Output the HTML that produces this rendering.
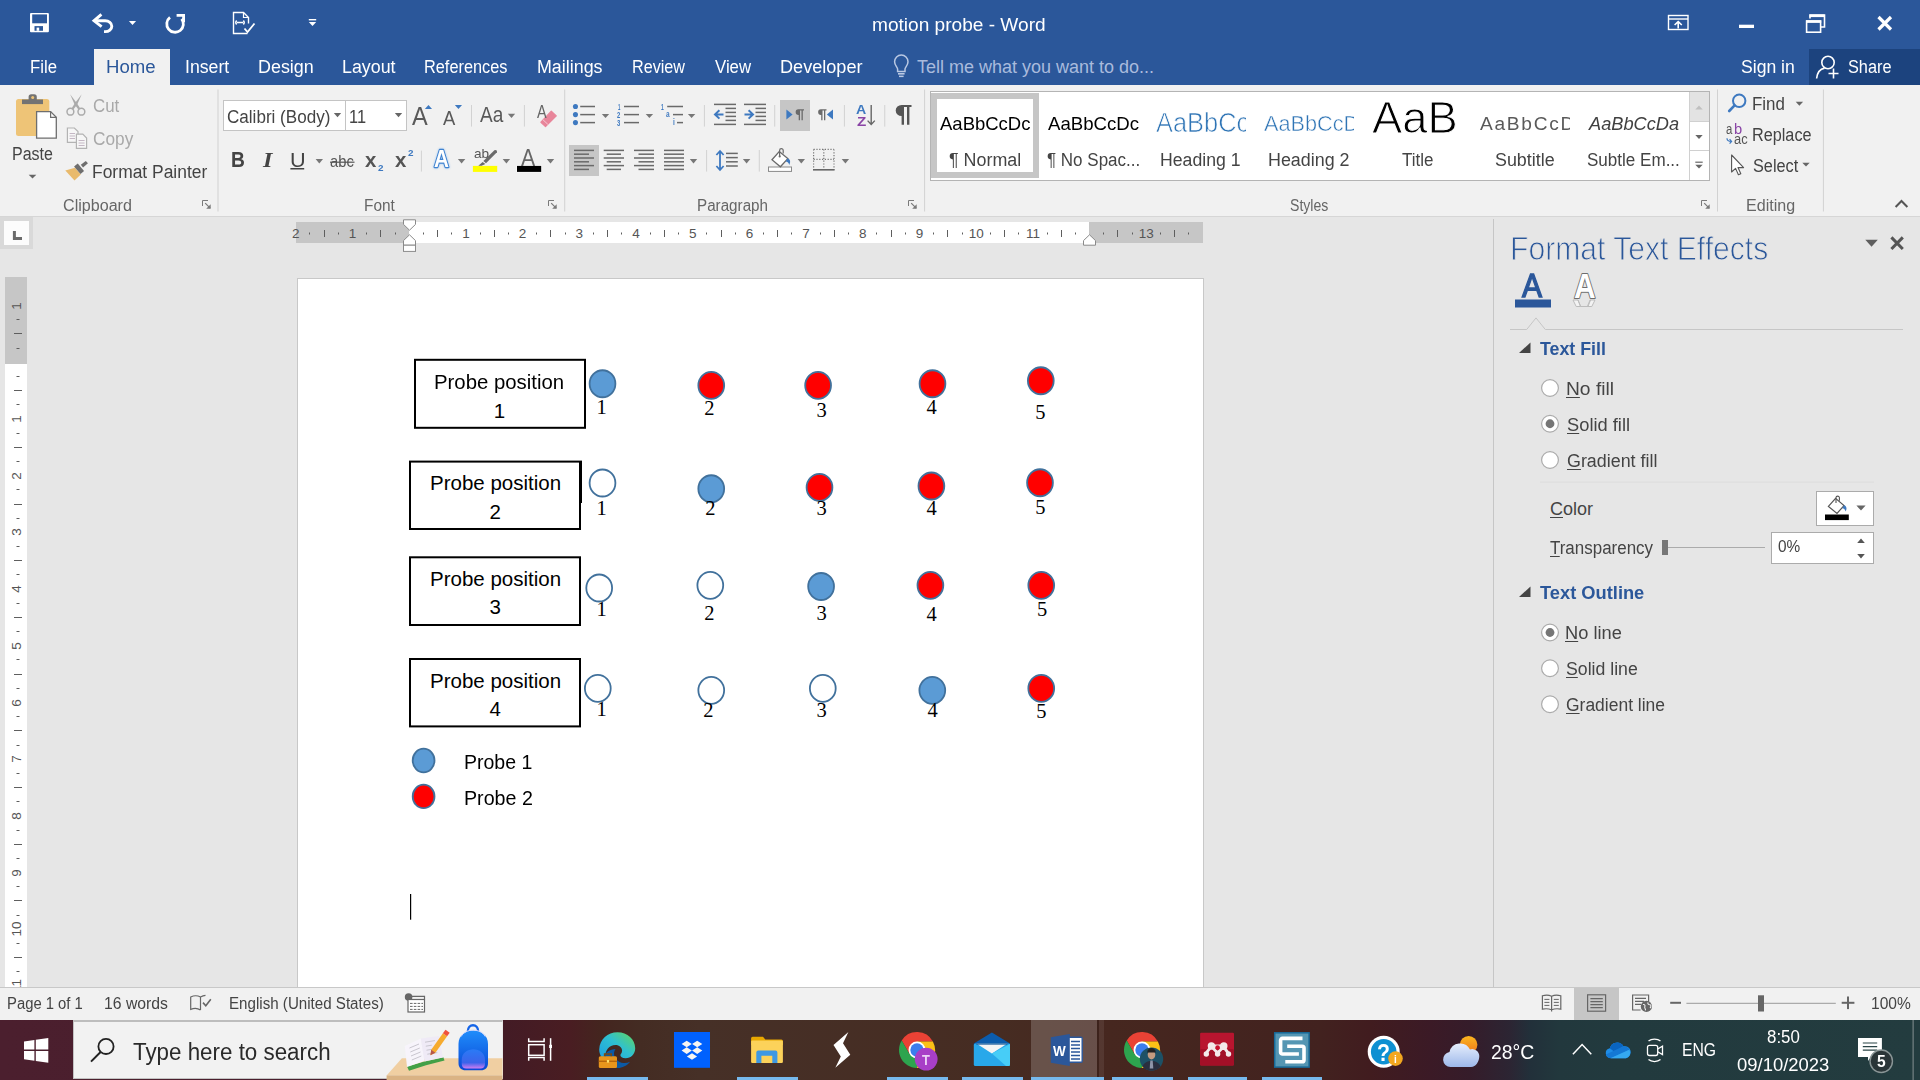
<!DOCTYPE html>
<html lang="en"><head><meta charset="utf-8"><title>motion probe - Word</title>
<style>
html,body{margin:0;padding:0}
body{width:1920px;height:1080px;position:relative;overflow:hidden;background:#e6e6e6;font-family:"Liberation Sans",sans-serif}
div,svg,.t{position:absolute}
.t{white-space:pre;transform-origin:0 0;display:block}
svg{left:0;top:0;overflow:visible}
u{text-decoration-thickness:1px;text-underline-offset:2px}

</style></head>
<body>
<div class="titlebar" style="left:0px;top:0px;width:1920px;height:85px;background:#2b579a;"></div>
<div class="tab-home" style="left:94px;top:49px;width:76px;height:37px;background:#f1f1f1;"></div>
<div class="share" style="left:1809px;top:49px;width:111px;height:36px;background:#1c437e;"></div>
<div class="ribbon" style="left:0px;top:85px;width:1920px;height:131px;background:#f1f1f1;border-bottom:1px solid #d6d6d6;box-sizing:content-box;"></div>
<div class="statusbar" style="left:0px;top:987px;width:1920px;height:33px;background:#f1f1f1;border-top:1px solid #c8c8c8;box-sizing:border-box;"></div>
<div class="taskbar" style="left:0px;top:1020px;width:1920px;height:60px;background:linear-gradient(90deg,#4b1f2e 0px,#4a1e2c 420px,#431b25 505px,#491d22 570px,#44251f 600px,#442c23 640px,#463027 700px,#462c22 1000px,#46271f 1110px,#42221f 1320px,#411c1f 1370px,#3b1a26 1430px,#351c2a 1470px,#2c2533 1510px,#22303a 1530px,#22383d 1560px,#223a3e 1620px,#233c3f 1920px);"></div>
<svg width="1920" height="1080" viewBox="0 0 1920 1080">
<rect x="30" y="13" width="18.900" height="19.200" rx="1" fill="#fff"/><rect x="32.200" y="14.400" width="14.800" height="8.900" fill="#2b579a"/><rect x="34.500" y="26.100" width="8.500" height="4.700" fill="#2b579a"/><rect x="36.600" y="27.600" width="2.600" height="3.200" fill="#fff"/>
<path d="M101.400 14.400l-7.400 6.400 7.600 5.900" fill="none" stroke="#fff" stroke-width="2.900"/><path d="M95.500 20.800h9.700a6.600 5.400 0 0 1 0 10.800h-1.200" fill="none" stroke="#fff" stroke-width="2.900"/>
<path d="M128.90 21.10h7.2l-3.60 3.8z" fill="#fff"/>
<path d="M170 17.400a8.300 8.300 0 1 0 11.600 1.400" fill="none" stroke="#fff" stroke-width="2.800"/><path d="M176.600 15.300h7v7" fill="none" stroke="#fff" stroke-width="2.800"/>
<path d="M247.5 33.5h-14v-21h10l5 5v6" fill="none" stroke="#fff" stroke-width="1.4"/><path d="M243.5 12.5v5h5" fill="none" stroke="#fff" stroke-width="1.2"/><path d="M237 22.5h6M236.6 20.5c-1 1.2-1 2.8 0 4M243.4 20.5c1 1.2 1 2.8 0 4" fill="none" stroke="#fff" stroke-width="1.4"/><path d="M244.5 28.5l3 3.5 7-8.5" fill="none" stroke="#fff" stroke-width="1.8"/>
<rect x="308.8" y="19" width="7.4" height="1.4" fill="#fff"/><path d="M308.80 22.10h7.4l-3.70 3.8z" fill="#fff"/>
<rect x="1668.5" y="15.5" width="19.5" height="14" fill="none" stroke="#fff" stroke-width="1.4"/><path d="M1668 19h20" stroke="#fff" stroke-width="1.4"/><path d="M1678.2 28.5v-6.5M1674.6 25l3.6-3.4 3.6 3.4" fill="none" stroke="#fff" stroke-width="1.6"/>
<rect x="1739" y="24.7" width="15" height="3.3" fill="#fff"/>
<path d="M1810 18.5v-3.5h14.5v12h-3.5" fill="none" stroke="#fff" stroke-width="1.6"/><path d="M1809.5 15.8h15" stroke="#fff" stroke-width="2.6"/><rect x="1806.6" y="21" width="14" height="11.2" fill="none" stroke="#fff" stroke-width="1.6"/><path d="M1806 21.6h15.2" stroke="#fff" stroke-width="2.6"/>
<path d="M1878.5 17l12.5 12.5M1891 17l-12.5 12.5" stroke="#fff" stroke-width="3.2"/>
<path d="M1298.5 0" fill="none"/><path d="M897.6 71.5v-2.4c0-2-3-3.6-3-7.4a6.7 6.7 0 0 1 13.4 0c0 3.8-3 5.4-3 7.4v2.4z" fill="none" stroke="#b9c8e3" stroke-width="1.5"/><rect x="898" y="73" width="6.6" height="1.6" fill="#b9c8e3"/><rect x="899" y="75.6" width="4.6" height="1.5" fill="#b9c8e3"/>
<circle cx="1828" cy="62.5" r="6.2" fill="none" stroke="#fff" stroke-width="1.6"/><path d="M1816.6 78.5c0.6-6 4-9.6 8-10.4" fill="none" stroke="#fff" stroke-width="1.6"/><path d="M1833.5 68.5v10M1828.5 73.5h10" stroke="#fff" stroke-width="1.6"/>
</svg>
<span class="t" style="left:871.94px;top:13.00px;font:400 18px 'Liberation Sans',sans-serif;line-height:24px;color:#fff;transform:scaleX(1.0604);">motion probe - Word</span>
<span class="t" style="left:30.07px;top:55.00px;font:400 18px 'Liberation Sans',sans-serif;line-height:24px;color:#fff;transform:scaleX(0.9288);">File</span>
<span class="t" style="left:184.52px;top:55.00px;font:400 18px 'Liberation Sans',sans-serif;line-height:24px;color:#fff;transform:scaleX(0.9826);">Insert</span>
<span class="t" style="left:257.75px;top:55.00px;font:400 18px 'Liberation Sans',sans-serif;line-height:24px;color:#fff;transform:scaleX(0.9950);">Design</span>
<span class="t" style="left:341.51px;top:55.00px;font:400 18px 'Liberation Sans',sans-serif;line-height:24px;color:#fff;transform:scaleX(0.9898);">Layout</span>
<span class="t" style="left:423.59px;top:55.00px;font:400 18px 'Liberation Sans',sans-serif;line-height:24px;color:#fff;transform:scaleX(0.9061);">References</span>
<span class="t" style="left:536.51px;top:55.00px;font:400 18px 'Liberation Sans',sans-serif;line-height:24px;color:#fff;transform:scaleX(0.9920);">Mailings</span>
<span class="t" style="left:631.60px;top:55.00px;font:400 18px 'Liberation Sans',sans-serif;line-height:24px;color:#fff;transform:scaleX(0.8980);">Review</span>
<span class="t" style="left:715.00px;top:55.00px;font:400 18px 'Liberation Sans',sans-serif;line-height:24px;color:#fff;transform:scaleX(0.9322);">View</span>
<span class="t" style="left:779.99px;top:55.00px;font:400 18px 'Liberation Sans',sans-serif;line-height:24px;color:#fff;transform:scaleX(1.0055);">Developer</span>
<span class="t" style="left:106.47px;top:55.00px;font:400 18px 'Liberation Sans',sans-serif;line-height:24px;color:#2b579a;transform:scaleX(1.0318);">Home</span>
<span class="t" style="left:917.00px;top:55.00px;font:400 18px 'Liberation Sans',sans-serif;line-height:24px;color:#a9bbdd;">Tell me what you want to do...</span>
<span class="t" style="left:1740.50px;top:55.00px;font:400 18px 'Liberation Sans',sans-serif;line-height:24px;color:#fff;transform:scaleX(0.9773);">Sign in</span>
<span class="t" style="left:1847.50px;top:55.00px;font:400 18px 'Liberation Sans',sans-serif;line-height:24px;color:#fff;transform:scaleX(0.9058);">Share</span>
<div style="left:780px;top:100px;width:30px;height:30.5px;background:#c6c6c6;"></div>
<div style="left:569px;top:145px;width:30px;height:31px;background:#c6c6c6;"></div>
<div style="left:223px;top:100px;width:123px;height:31px;background:#fff;border:1px solid #c4c4c4;box-sizing:border-box;"></div>
<div style="left:345px;top:100px;width:62px;height:31px;background:#fff;border:1px solid #c4c4c4;box-sizing:border-box;"></div>
<div class="gallery" style="left:930px;top:91px;width:780px;height:90px;background:#fff;border:1px solid #b4b4b4;box-sizing:border-box;"></div>
<div style="left:931px;top:93px;width:108px;height:84.5px;border:6px solid #c6c6c6;box-sizing:border-box;"></div>
<div style="left:1689px;top:92px;width:20px;height:30px;background:#e3e3e3;border-left:1px solid #d0d0d0;border-bottom:1px solid #d0d0d0;box-sizing:border-box;"></div>
<div style="left:1689px;top:122px;width:20px;height:28.5px;background:#fff;border-left:1px solid #d0d0d0;border-bottom:1px solid #d0d0d0;box-sizing:border-box;"></div>
<div style="left:1689px;top:150.5px;width:20px;height:29.5px;background:#fff;border-left:1px solid #d0d0d0;box-sizing:border-box;"></div>
<svg width="1920" height="1080" viewBox="0 0 1920 1080">
<rect x="217.5" y="89.5" width="1" height="122.0" fill="#d2d2d2"/>
<rect x="564.2" y="89.5" width="1" height="122.0" fill="#d2d2d2"/>
<rect x="924.1" y="89.5" width="1" height="122.0" fill="#d2d2d2"/>
<rect x="1717.0" y="89.5" width="1" height="122.0" fill="#d2d2d2"/>
<rect x="1822.9" y="89.5" width="1" height="122.0" fill="#d2d2d2"/>
<rect x="16" y="99" width="33.3" height="37" rx="2.5" fill="#eec477"/><rect x="22" y="99.5" width="21" height="4.6" fill="#737373"/><path d="M28.6 100v-3.2a2.6 2.6 0 0 1 2.6-2.6h3a2.6 2.6 0 0 1 2.6 2.6v3.2z" fill="#737373"/><circle cx="32.7" cy="97.6" r="1.5" fill="#eec477"/><path d="M36.6 111.6h14l5.7 5.7v20.8h-19.7z" fill="#fff" stroke="#6e6e6e" stroke-width="1.3"/><path d="M50.6 111.6v5.7h5.7" fill="none" stroke="#6e6e6e" stroke-width="1.2"/>
<path d="M28.70 174.80h7.6l-3.80 3.8z" fill="#666"/>
<g fill="#ababab"><path d="M70.100 94.200l6.800 9 3.400 5.200-1.900 1-3.800-4.800z"/><path d="M81.700 94.200l-6.800 9-3.400 5.200 1.900 1 3.800-4.800z"/></g><g fill="none" stroke="#ababab" stroke-width="1.500"><circle cx="70.400" cy="111.700" r="3.400"/><circle cx="81.400" cy="111.700" r="3.400"/></g>
<g fill="#f6f6f6" stroke="#b3b3b3" stroke-width="1.2"><path d="M67.4 128h7l3.6 3.6v10.8h-10.6z"/><path d="M76.4 134.2h6.4l3.8 3.8v10.4h-10.2z"/></g><rect x="69.6" y="133.00" width="5.400000000000006" height="1" fill="#c4b7c4"/><rect x="69.6" y="135.50" width="5.400000000000006" height="1" fill="#c4b7c4"/><rect x="69.6" y="138.00" width="5.400000000000006" height="1" fill="#c4b7c4"/><rect x="78.6" y="140.00" width="6.0" height="1" fill="#c4b7c4"/><rect x="78.6" y="142.50" width="6.0" height="1" fill="#c4b7c4"/><rect x="78.6" y="145.00" width="6.0" height="1" fill="#c4b7c4"/>
<path d="M65.300 170.600l9.700-2.800 5.800 6.800-6.300 6z" fill="#e9ba6c"/><path d="M74.050 166.500l3.700-3 6.300 7.600-3.550 3z" fill="#6e6e6e"/><path d="M80.800 164.850l5-3.850 2.150 2.200-4.900 4.200z" fill="#6e6e6e"/>
<path d="M208 200.5h-5.5v5.5" fill="none" stroke="#7a7a7a" stroke-width="1"/><path d="M205.2 203.2l5 5" stroke="#7a7a7a" stroke-width="1.2"/><path d="M210.7 204.2v4.5h-4.5z" fill="#7a7a7a"/>
<path d="M333.85 112.95h7.3l-3.65 4.2z" fill="#666"/><path d="M394.85 112.95h7.3l-3.65 4.2z" fill="#666"/>
<path d="M428.45 105l3.6 3.9h-7.2z" fill="#3e79c0"/><path d="M458.45 108.9l3.6-3.9h-7.2z" fill="#3e79c0"/>
<rect x="471.0" y="105" width="1" height="21.599999999999994" fill="#d2d2d2"/><rect x="523.9" y="105" width="1" height="21.599999999999994" fill="#d2d2d2"/><rect x="420.9" y="150.6" width="1" height="21.0" fill="#d2d2d2"/>
<path d="M507.85 113.85h7.3l-3.65 4.2z" fill="#777"/>
<path d="M551.3 111.2l5 4.7-10.800 10.600-4.600-4.300z" fill="#e8859a" stroke="#e8859a" stroke-width="1.2" stroke-linejoin="round"/><path d="M542.8 119.600l5 4.700" stroke="#f6c9d2" stroke-width="1"/>
<path d="M315.60 159.00h7.4l-3.70 4.4z" fill="#777"/><path d="M457.90 159.00h7.4l-3.70 4.4z" fill="#777"/><path d="M502.70 159.00h7.4l-3.70 4.4z" fill="#777"/><path d="M546.80 159.00h7.4l-3.70 4.4z" fill="#777"/>
<rect x="330" y="161.6" width="24.5" height="1.2" fill="#555"/>
<rect x="290.4" y="168" width="13.8" height="1.5" fill="#444"/>
<rect x="472.900" y="165.900" width="24.300" height="6" fill="#ffff00"/><rect x="516.500" y="165.400" width="25.200" height="7" fill="#fff"/><rect x="517" y="165.900" width="24.200" height="6" fill="#000"/>
<path d="M494.400 150.200a1.700 1.700 0 0 1 2.500 2l-10.900 11-2.600-2.100z" fill="#6a6a6a"/><path d="M482.700 162.100l2.600 1.800-3.700 1.900h-3.300z" fill="#6a6a6a"/>
<path d="M554 200.5h-5.5v5.5" fill="none" stroke="#7a7a7a" stroke-width="1"/><path d="M551.2 203.2l5 5" stroke="#7a7a7a" stroke-width="1.2"/><path d="M556.7 204.2v4.5h-4.5z" fill="#7a7a7a"/>
<circle cx="575.45" cy="106.5" r="2.55" fill="#3e79c0"/>
<circle cx="575.45" cy="114.6" r="2.55" fill="#3e79c0"/>
<circle cx="575.45" cy="122.6" r="2.55" fill="#3e79c0"/>
<rect x="580.2" y="105.75" width="14.799999999999955" height="1.5" fill="#6a6a6a"/><rect x="580.2" y="113.85" width="14.799999999999955" height="1.5" fill="#6a6a6a"/><rect x="580.2" y="121.85" width="14.799999999999955" height="1.5" fill="#6a6a6a"/>
<path d="M601.80 113.90h7.4l-3.70 4.2z" fill="#777"/>
<rect x="624" y="105.75" width="15" height="1.5" fill="#6a6a6a"/><rect x="624" y="113.85" width="15" height="1.5" fill="#6a6a6a"/><rect x="624" y="121.85" width="15" height="1.5" fill="#6a6a6a"/>
<path d="M645.70 113.90h7.4l-3.70 4.2z" fill="#777"/>
<rect x="667.2" y="105.75" width="15.799999999999955" height="1.5" fill="#6a6a6a"/><rect x="673" y="113.85" width="10" height="1.5" fill="#6a6a6a"/><rect x="677" y="121.85" width="6" height="1.5" fill="#6a6a6a"/>
<path d="M687.90 113.90h7.4l-3.70 4.2z" fill="#777"/>
<rect x="703.9" y="105" width="1" height="21.599999999999994" fill="#d2d2d2"/><rect x="774.2" y="105" width="1" height="21.599999999999994" fill="#d2d2d2"/><rect x="843.9" y="105" width="1" height="21.599999999999994" fill="#d2d2d2"/><rect x="884.25" y="105" width="1" height="21.599999999999994" fill="#d2d2d2"/>
<rect x="714" y="103.65" width="22" height="1.5" fill="#6a6a6a"/><rect x="714" y="123.65" width="22" height="1.5" fill="#6a6a6a"/><rect x="725.5" y="107.65" width="10.5" height="1.5" fill="#6a6a6a"/><rect x="725.5" y="111.65" width="10.5" height="1.5" fill="#6a6a6a"/><rect x="725.5" y="115.65" width="10.5" height="1.5" fill="#6a6a6a"/><rect x="725.5" y="119.65" width="10.5" height="1.5" fill="#6a6a6a"/>
<path d="M723.5 114.4h-8M719.4 110.2l-4.4 4.2 4.4 4.2" fill="none" stroke="#3e79c0" stroke-width="2"/>
<rect x="744" y="103.65" width="22" height="1.5" fill="#6a6a6a"/><rect x="744" y="123.65" width="22" height="1.5" fill="#6a6a6a"/><rect x="755.5" y="107.65" width="10.5" height="1.5" fill="#6a6a6a"/><rect x="755.5" y="111.65" width="10.5" height="1.5" fill="#6a6a6a"/><rect x="755.5" y="115.65" width="10.5" height="1.5" fill="#6a6a6a"/><rect x="755.5" y="119.65" width="10.5" height="1.5" fill="#6a6a6a"/>
<path d="M744.5 114.4h8M748.6 110.2l4.4 4.2-4.4 4.2" fill="none" stroke="#3e79c0" stroke-width="2"/>
<path d="M786.4 109.6l6.2 5-6.2 5z" fill="#3e79c0"/><path d="M833 109.6l-6.2 5 6.2 5z" fill="#3e79c0"/>
<path d="M798.40 109.3h5.60v1.30h-1.20v9.70h-1.30v-9.70h-1.50v9.70h-1.30v-5.20a2.90 2.90 0 0 1 -0.30 -5.80z" fill="#6a6a6a"/><path d="M820.90 109.3h5.60v1.30h-1.20v9.70h-1.30v-9.70h-1.50v9.70h-1.30v-5.20a2.90 2.90 0 0 1 -0.30 -5.80z" fill="#6a6a6a"/>
<path d="M871.2 105v19.5M867.6 120.6l3.6 3.9 3.6-3.9" fill="none" stroke="#666" stroke-width="1.4"/>
<path d="M901.600 105h9.900v2.100h-2.100v17.600h-2.400v-17.600h-3v17.600h-2.400v-8.700a5.900 5.500 0 0 1 0-11z" fill="#555"/>
<rect x="574" y="149.65" width="20" height="1.5" fill="#6a6a6a"/><rect x="574" y="157.25" width="20" height="1.5" fill="#6a6a6a"/><rect x="574" y="164.85" width="20" height="1.5" fill="#6a6a6a"/><rect x="574" y="153.45" width="15" height="1.5" fill="#6a6a6a"/><rect x="574" y="161.05" width="15" height="1.5" fill="#6a6a6a"/><rect x="574" y="168.65" width="15" height="1.5" fill="#6a6a6a"/>
<rect x="603.7" y="149.65" width="20.299999999999955" height="1.5" fill="#6a6a6a"/><rect x="603.7" y="157.25" width="20.299999999999955" height="1.5" fill="#6a6a6a"/><rect x="603.7" y="164.85" width="20.299999999999955" height="1.5" fill="#6a6a6a"/><rect x="606.7" y="153.45" width="14.299999999999955" height="1.5" fill="#6a6a6a"/><rect x="606.7" y="161.05" width="14.299999999999955" height="1.5" fill="#6a6a6a"/><rect x="606.7" y="168.65" width="14.299999999999955" height="1.5" fill="#6a6a6a"/>
<rect x="634" y="149.65" width="20" height="1.5" fill="#6a6a6a"/><rect x="634" y="157.25" width="20" height="1.5" fill="#6a6a6a"/><rect x="634" y="164.85" width="20" height="1.5" fill="#6a6a6a"/><rect x="638.5" y="153.45" width="15.5" height="1.5" fill="#6a6a6a"/><rect x="638.5" y="161.05" width="15.5" height="1.5" fill="#6a6a6a"/><rect x="638.5" y="168.65" width="15.5" height="1.5" fill="#6a6a6a"/>
<rect x="664" y="149.65" width="20" height="1.5" fill="#6a6a6a"/><rect x="664" y="153.45" width="20" height="1.5" fill="#6a6a6a"/><rect x="664" y="157.25" width="20" height="1.5" fill="#6a6a6a"/><rect x="664" y="161.05" width="20" height="1.5" fill="#6a6a6a"/><rect x="664" y="164.85" width="20" height="1.5" fill="#6a6a6a"/><rect x="664" y="168.65" width="20" height="1.5" fill="#6a6a6a"/>
<path d="M689.80 159.00h7.4l-3.70 4.4z" fill="#777"/>
<rect x="706.1" y="150" width="1" height="21.599999999999994" fill="#d2d2d2"/><rect x="758.8" y="150" width="1" height="21.599999999999994" fill="#d2d2d2"/>
<path d="M720 150.8v19.4M716.4 155l3.6-4 3.6 4M716.4 166l3.6 4 3.6-4" fill="none" stroke="#3e79c0" stroke-width="1.8"/>
<rect x="726" y="152.65" width="11.799999999999955" height="1.5" fill="#6a6a6a"/><rect x="726" y="156.85" width="11.799999999999955" height="1.5" fill="#6a6a6a"/><rect x="726" y="161.05" width="11.799999999999955" height="1.5" fill="#6a6a6a"/><rect x="726" y="165.25" width="11.799999999999955" height="1.5" fill="#6a6a6a"/>
<path d="M742.90 159.00h7.4l-3.70 4.4z" fill="#777"/>
<rect x="768.5" y="167" width="23" height="4.4" fill="#fff" stroke="#8a8a8a" stroke-width="1"/><path d="M779.2 151.6l8.6 7-7.4 8.2-8.4-7z" fill="#fff" stroke="#6a6a6a" stroke-width="1.3"/><path d="M779.6 156v-5.6a1.8 1.8 0 0 1 3.6 0v3" fill="none" stroke="#6a6a6a" stroke-width="1.2"/><circle cx="779.7" cy="156.4" r="1.1" fill="#6a6a6a"/><path d="M787.6 158.4c2.6.6 3.4 3.2 1.6 6.6-.4-2.4-1.6-3.4-3.6-3.6z" fill="#3e79c0"/>
<path d="M797.60 159.00h7.4l-3.70 4.4z" fill="#777"/>
<g stroke="#777" stroke-width="1.2" stroke-dasharray="1.2 1.6" fill="none"><path d="M813.6 149.4h20.4M813.6 149.4v20M834 149.4v20M823.8 149.4v20M813.6 159.4h20.4"/></g><rect x="813" y="169" width="21.6" height="1.6" fill="#666"/>
<path d="M841.70 159.00h7.4l-3.70 4.4z" fill="#777"/>
<path d="M914 200.5h-5.5v5.5" fill="none" stroke="#7a7a7a" stroke-width="1"/><path d="M911.2 203.2l5 5" stroke="#7a7a7a" stroke-width="1.2"/><path d="M916.7 204.2v4.5h-4.5z" fill="#7a7a7a"/>
<path d="M1695.30 109.40h7.4l-3.70 -3.8z" fill="#c0c0c0"/><path d="M1695.30 135.10h7.4l-3.70 3.8z" fill="#666"/>
<rect x="1695.3" y="161.6" width="7.4" height="1.2" fill="#666"/><path d="M1695.30 164.70h7.4l-3.70 3.8z" fill="#666"/>
<path d="M1707 200.5h-5.5v5.5" fill="none" stroke="#7a7a7a" stroke-width="1"/><path d="M1704.2 203.2l5 5" stroke="#7a7a7a" stroke-width="1.2"/><path d="M1709.7 204.2v4.5h-4.5z" fill="#7a7a7a"/>
<circle cx="1739.2" cy="100.8" r="6.2" fill="none" stroke="#3e79c0" stroke-width="2"/><path d="M1734.6 105.4l-5.400 5.600" stroke="#3e79c0" stroke-width="2.6" stroke-linecap="round"/>
<path d="M1795.70 101.85h7.4l-3.70 3.8z" fill="#666"/><path d="M1802.30 162.80h7.4l-3.70 3.8z" fill="#666"/>
<path d="M1727 138.2c0 2.4 1.2 3.2 4.4 3.2M1729.6 139.2l2 2.2-2 2.2" fill="none" stroke="#3e79c0" stroke-width="1.2"/>
<path d="M1731.6 155v17l4-3.6 2.8 6.4 2.4-1-2.8-6.2h5.6z" fill="#fff" stroke="#555" stroke-width="1.1" stroke-linejoin="round"/>
<path d="M1895.6 207l5.9-6 5.9 6" fill="none" stroke="#555" stroke-width="2"/>
</svg>
<span class="t" style="left:12.11px;top:142.00px;font:400 18px 'Liberation Sans',sans-serif;line-height:24px;color:#444;transform:scaleX(0.8885);">Paste</span>
<span class="t" style="left:92.75px;top:94.00px;font:400 18px 'Liberation Sans',sans-serif;line-height:24px;color:#a9a9a9;transform:scaleX(0.9372);">Cut</span>
<span class="t" style="left:92.75px;top:127.00px;font:400 18px 'Liberation Sans',sans-serif;line-height:24px;color:#a9a9a9;transform:scaleX(0.9579);">Copy</span>
<span class="t" style="left:91.78px;top:160.00px;font:400 18px 'Liberation Sans',sans-serif;line-height:24px;color:#444;transform:scaleX(0.9679);">Format Painter</span>
<span class="t" style="left:63.00px;top:195.00px;font:400 16px 'Liberation Sans',sans-serif;line-height:21px;color:#666;transform:scaleX(1.0061);">Clipboard</span>
<span class="t" style="left:226.60px;top:105.00px;font:400 18px 'Liberation Sans',sans-serif;line-height:24px;color:#444;transform:scaleX(0.9478);">Calibri (Body)</span>
<span class="t" style="left:349.49px;top:105.00px;font:400 18px 'Liberation Sans',sans-serif;line-height:24px;color:#444;transform:scaleX(0.9109);">11</span>
<span class="t" style="left:412.00px;top:100.00px;font:400 25px 'Liberation Sans',sans-serif;line-height:32px;color:#595959;transform:scaleX(0.9412);">A</span>
<span class="t" style="left:443.00px;top:105.00px;font:400 20px 'Liberation Sans',sans-serif;line-height:26px;color:#595959;transform:scaleX(0.9214);">A</span>
<span class="t" style="left:480.30px;top:100.00px;font:400 22px 'Liberation Sans',sans-serif;line-height:29px;color:#595959;transform:scaleX(0.8654);">Aa</span>
<span class="t" style="left:537.20px;top:99.00px;font:400 18.8px 'Liberation Sans',sans-serif;line-height:25px;color:#666;transform:scaleX(0.7692);">A</span>
<span class="t" style="left:230.61px;top:146.00px;font:700 21.5px 'Liberation Sans',sans-serif;line-height:28px;color:#444;transform:scaleX(0.8929);">B</span>
<span class="t" style="left:262.63px;top:146.00px;font:italic 700 21.5px 'Liberation Serif',serif;line-height:28px;color:#444;transform:scaleX(1.1300);">I</span>
<span class="t" style="left:289.57px;top:146.00px;font:400 21px 'Liberation Sans',sans-serif;line-height:27px;color:#444;transform:scaleX(1.0308);">U</span>
<span class="t" style="left:329.80px;top:150.00px;font:400 17px 'Liberation Sans',sans-serif;line-height:23px;color:#555;transform:scaleX(0.8671);">abc</span>
<span class="t" style="left:364.50px;top:147.00px;font:700 19.5px 'Liberation Sans',sans-serif;line-height:26px;color:#555;transform:scaleX(1.0455);">x</span>
<span class="t" style="left:377.80px;top:160.00px;font:700 9.5px 'Liberation Sans',sans-serif;line-height:15px;color:#3e79c0;transform:scaleX(1.0400);">2</span>
<span class="t" style="left:394.50px;top:147.00px;font:700 19.5px 'Liberation Sans',sans-serif;line-height:26px;color:#555;transform:scaleX(1.0455);">x</span>
<span class="t" style="left:407.80px;top:145.00px;font:700 9.5px 'Liberation Sans',sans-serif;line-height:15px;color:#3e79c0;transform:scaleX(1.0400);">2</span>
<svg style="left:434.30px;top:167px" width="1" height="1"><text transform="scale(0.9000,1)" x="0" y="0" font-family="Liberation Sans,sans-serif" font-size="23" font-weight="700" fill="#fff" stroke="#3f82cf" stroke-width="2.3" stroke-linejoin="round" paint-order="stroke" style="filter:drop-shadow(0 0 1.2px #9cc6f3)">A</text></svg>
<span class="t" style="left:473.60px;top:144.00px;font:400 13px 'Liberation Sans',sans-serif;line-height:19px;color:#555;transform:scaleX(1.0471);">ab</span>
<span class="t" style="left:521.40px;top:143.00px;font:400 23.3px 'Liberation Sans',sans-serif;line-height:30px;color:#666;transform:scaleX(0.9125);">A</span>
<span class="t" style="left:363.64px;top:195.00px;font:400 16px 'Liberation Sans',sans-serif;line-height:21px;color:#666;transform:scaleX(0.9629);">Font</span>
<span class="t" style="left:618.00px;top:101.00px;font:700 8.2px 'Liberation Sans',sans-serif;line-height:13px;color:#3e79c0;transform:scaleX(0.5200);">1</span>
<span class="t" style="left:617.40px;top:109.00px;font:700 8.2px 'Liberation Sans',sans-serif;line-height:13px;color:#3e79c0;transform:scaleX(0.7200);">2</span>
<span class="t" style="left:617.40px;top:117.00px;font:700 8.2px 'Liberation Sans',sans-serif;line-height:13px;color:#3e79c0;transform:scaleX(0.7200);">3</span>
<span class="t" style="left:660.80px;top:101.00px;font:700 8.2px 'Liberation Sans',sans-serif;line-height:13px;color:#3e79c0;transform:scaleX(0.6000);">1</span>
<span class="t" style="left:666.00px;top:107.00px;font:700 8.6px 'Liberation Sans',sans-serif;line-height:14px;color:#3e79c0;transform:scaleX(0.7600);">a</span>
<span class="t" style="left:672.70px;top:116.00px;font:700 8.2px 'Liberation Sans',sans-serif;line-height:13px;color:#3e79c0;transform:scaleX(0.8000);">i</span>
<span class="t" style="left:856.00px;top:100.00px;font:700 13.5px 'Liberation Sans',sans-serif;line-height:19px;color:#3e79c0;transform:scaleX(1.0500);">A</span>
<span class="t" style="left:857.00px;top:112.00px;font:700 13.5px 'Liberation Sans',sans-serif;line-height:19px;color:#8a45a6;transform:scaleX(1.1250);">Z</span>
<span class="t" style="left:696.85px;top:195.00px;font:400 16px 'Liberation Sans',sans-serif;line-height:21px;color:#666;transform:scaleX(0.9503);">Paragraph</span>
<span class="t" style="left:940.00px;top:111.00px;font:400 19px 'Liberation Sans',sans-serif;line-height:25px;color:#000;transform:scaleX(0.9738);">AaBbCcDc</span>
<span class="t" style="left:949.40px;top:148.00px;font:400 18px 'Liberation Sans',sans-serif;line-height:24px;color:#444;transform:scaleX(0.9933);">¶ Normal</span>
<span class="t" style="left:1047.80px;top:111.00px;font:400 19px 'Liberation Sans',sans-serif;line-height:25px;color:#000;transform:scaleX(0.9803);">AaBbCcDc</span>
<span class="t" style="left:1046.50px;top:148.00px;font:400 18px 'Liberation Sans',sans-serif;line-height:24px;color:#444;transform:scaleX(0.9441);">¶ No Spac...</span>
<span class="t" style="left:1159.92px;top:148.00px;font:400 18px 'Liberation Sans',sans-serif;line-height:24px;color:#444;transform:scaleX(0.9808);">Heading 1</span>
<span class="t" style="left:1267.51px;top:148.00px;font:400 18px 'Liberation Sans',sans-serif;line-height:24px;color:#444;transform:scaleX(0.9932);">Heading 2</span>
<span class="t" style="left:1401.60px;top:148.00px;font:400 18px 'Liberation Sans',sans-serif;line-height:24px;color:#444;transform:scaleX(0.9422);">Title</span>
<span class="t" style="left:1495.40px;top:148.00px;font:400 18px 'Liberation Sans',sans-serif;line-height:24px;color:#444;transform:scaleX(0.9929);">Subtitle</span>
<span class="t" style="left:1586.60px;top:148.00px;font:400 18px 'Liberation Sans',sans-serif;line-height:24px;color:#444;transform:scaleX(0.9470);">Subtle Em...</span>
<span class="t" style="left:1588.96px;top:111.00px;font:italic 400 19px 'Liberation Sans',sans-serif;line-height:25px;color:#404040;transform:scaleX(0.9585);">AaBbCcDa</span>
<div style="left:1471px;top:95px;width:99.40px;height:55.00px;overflow:hidden"><span class="t" style="left:9.00px;top:17.00px;font:400 18px 'Liberation Sans',sans-serif;line-height:24px;color:#5a5a5a;transform:scaleX(1.0637);letter-spacing:1.6px;">AaBbCcDd</span></div>
<span class="t" style="left:1289.70px;top:195.00px;font:400 16px 'Liberation Sans',sans-serif;line-height:21px;color:#666;transform:scaleX(0.8790);">Styles</span>
<span class="t" style="left:1752.06px;top:92.00px;font:400 18px 'Liberation Sans',sans-serif;line-height:24px;color:#444;transform:scaleX(0.9393);">Find</span>
<span class="t" style="left:1752.10px;top:123.00px;font:400 18px 'Liberation Sans',sans-serif;line-height:24px;color:#444;transform:scaleX(0.9011);">Replace</span>
<span class="t" style="left:1752.75px;top:154.00px;font:400 18px 'Liberation Sans',sans-serif;line-height:24px;color:#444;transform:scaleX(0.9045);">Select</span>
<span class="t" style="left:1745.60px;top:195.00px;font:400 16px 'Liberation Sans',sans-serif;line-height:21px;color:#666;transform:scaleX(1.0038);">Editing</span>
<span class="t" style="left:1726.00px;top:119.00px;font:400 14px 'Liberation Sans',sans-serif;line-height:20px;color:#555;transform:scaleX(0.8125);">a</span>
<span class="t" style="left:1734.40px;top:119.00px;font:400 14px 'Liberation Sans',sans-serif;line-height:20px;color:#8a45a6;transform:scaleX(1.0500);">b</span>
<span class="t" style="left:1734.40px;top:129.00px;font:400 14px 'Liberation Sans',sans-serif;line-height:20px;color:#555;transform:scaleX(0.9198);">ac</span>
<div style="left:1147px;top:95px;width:98.60px;height:55.00px;overflow:hidden"><span class="t" style="left:9.20px;top:11.00px;font:400 27px 'Liberation Sans',sans-serif;line-height:34px;color:#2e74b5;transform:scaleX(0.9412);-webkit-text-stroke:0.7px #fff;">AaBbCcDc</span></div>
<div style="left:1255px;top:95px;width:99.40px;height:55.00px;overflow:hidden"><span class="t" style="left:9.00px;top:14.00px;font:400 21.8px 'Liberation Sans',sans-serif;line-height:29px;color:#2e74b5;transform:scaleX(0.9955);-webkit-text-stroke:0.5px #fff;">AaBbCcDc</span></div>
<div style="left:1363px;top:102px;width:95.50px;height:48.00px;overflow:hidden"><span class="t" style="left:9.20px;top:-11.00px;font:400 44px 'Liberation Sans',sans-serif;line-height:53px;color:#000;transform:scaleX(1.0316);-webkit-text-stroke:1px #fff;">AaBbCcDc</span></div>
<div style="left:0px;top:217px;width:33px;height:31.7px;background:#d9d9d9;"></div>
<div style="left:3.75px;top:220.6px;width:25.55px;height:24.6px;background:#fcfcfc;"></div>
<div class="hruler" style="left:296px;top:222px;width:907px;height:20.5px;background:#fff;"></div>
<div style="left:296px;top:222px;width:113px;height:20.5px;background:#c6c6c6;"></div>
<div style="left:1089.4px;top:222px;width:113.6px;height:20.5px;background:#c6c6c6;"></div>
<div class="vruler" style="left:5px;top:277px;width:22px;height:710px;background:#fff;"></div>
<div style="left:5px;top:277px;width:22px;height:86.5px;background:#c6c6c6;"></div>
<div class="page" style="left:297px;top:278px;width:907px;height:709px;background:#fff;border:1px solid #c8c8c8;border-bottom:none;box-sizing:border-box;"></div>
<div style="left:1493px;top:218.5px;width:1px;height:768.5px;background:#c6c6c6;"></div>
<svg width="1920" height="1080" viewBox="0 0 1920 1080">
<path d="M14.400 231v7.500h7.600" fill="none" stroke="#6a6a6a" stroke-width="3"/>
<rect x="309" y="232.500" width="1" height="2" fill="#5e5e5e"/>
<rect x="324" y="230" width="1" height="7" fill="#5e5e5e"/>
<rect x="338" y="232.500" width="1" height="2" fill="#5e5e5e"/>
<rect x="366" y="232.500" width="1" height="2" fill="#5e5e5e"/>
<rect x="380" y="230" width="1" height="7" fill="#5e5e5e"/>
<rect x="395" y="232.500" width="1" height="2" fill="#5e5e5e"/>
<rect x="423" y="232.500" width="1" height="2" fill="#5e5e5e"/>
<rect x="437" y="230" width="1" height="7" fill="#5e5e5e"/>
<rect x="451" y="232.500" width="1" height="2" fill="#5e5e5e"/>
<rect x="480" y="232.500" width="1" height="2" fill="#5e5e5e"/>
<rect x="494" y="230" width="1" height="7" fill="#5e5e5e"/>
<rect x="508" y="232.500" width="1" height="2" fill="#5e5e5e"/>
<rect x="536" y="232.500" width="1" height="2" fill="#5e5e5e"/>
<rect x="550" y="230" width="1" height="7" fill="#5e5e5e"/>
<rect x="565" y="232.500" width="1" height="2" fill="#5e5e5e"/>
<rect x="593" y="232.500" width="1" height="2" fill="#5e5e5e"/>
<rect x="607" y="230" width="1" height="7" fill="#5e5e5e"/>
<rect x="621" y="232.500" width="1" height="2" fill="#5e5e5e"/>
<rect x="650" y="232.500" width="1" height="2" fill="#5e5e5e"/>
<rect x="664" y="230" width="1" height="7" fill="#5e5e5e"/>
<rect x="678" y="232.500" width="1" height="2" fill="#5e5e5e"/>
<rect x="706" y="232.500" width="1" height="2" fill="#5e5e5e"/>
<rect x="721" y="230" width="1" height="7" fill="#5e5e5e"/>
<rect x="735" y="232.500" width="1" height="2" fill="#5e5e5e"/>
<rect x="763" y="232.500" width="1" height="2" fill="#5e5e5e"/>
<rect x="777" y="230" width="1" height="7" fill="#5e5e5e"/>
<rect x="791" y="232.500" width="1" height="2" fill="#5e5e5e"/>
<rect x="820" y="232.500" width="1" height="2" fill="#5e5e5e"/>
<rect x="834" y="230" width="1" height="7" fill="#5e5e5e"/>
<rect x="848" y="232.500" width="1" height="2" fill="#5e5e5e"/>
<rect x="876" y="232.500" width="1" height="2" fill="#5e5e5e"/>
<rect x="891" y="230" width="1" height="7" fill="#5e5e5e"/>
<rect x="905" y="232.500" width="1" height="2" fill="#5e5e5e"/>
<rect x="933" y="232.500" width="1" height="2" fill="#5e5e5e"/>
<rect x="947" y="230" width="1" height="7" fill="#5e5e5e"/>
<rect x="962" y="232.500" width="1" height="2" fill="#5e5e5e"/>
<rect x="990" y="232.500" width="1" height="2" fill="#5e5e5e"/>
<rect x="1004" y="230" width="1" height="7" fill="#5e5e5e"/>
<rect x="1018" y="232.500" width="1" height="2" fill="#5e5e5e"/>
<rect x="1047" y="232.500" width="1" height="2" fill="#5e5e5e"/>
<rect x="1061" y="230" width="1" height="7" fill="#5e5e5e"/>
<rect x="1075" y="232.500" width="1" height="2" fill="#5e5e5e"/>
<rect x="1103" y="232.500" width="1" height="2" fill="#5e5e5e"/>
<rect x="1117" y="230" width="1" height="7" fill="#5e5e5e"/>
<rect x="1132" y="232.500" width="1" height="2" fill="#5e5e5e"/>
<rect x="1160" y="232.500" width="1" height="2" fill="#5e5e5e"/>
<rect x="1174" y="230" width="1" height="7" fill="#5e5e5e"/>
<rect x="1188" y="232.500" width="1" height="2" fill="#5e5e5e"/>
<rect x="16.500" y="319" width="3" height="1" fill="#5e5e5e"/>
<rect x="14" y="333" width="8" height="1" fill="#5e5e5e"/>
<rect x="16.500" y="348" width="3" height="1" fill="#5e5e5e"/>
<rect x="16.500" y="376" width="3" height="1" fill="#5e5e5e"/>
<rect x="14" y="390" width="8" height="1" fill="#5e5e5e"/>
<rect x="16.500" y="404" width="3" height="1" fill="#5e5e5e"/>
<rect x="16.500" y="433" width="3" height="1" fill="#5e5e5e"/>
<rect x="14" y="447" width="8" height="1" fill="#5e5e5e"/>
<rect x="16.500" y="461" width="3" height="1" fill="#5e5e5e"/>
<rect x="16.500" y="489" width="3" height="1" fill="#5e5e5e"/>
<rect x="14" y="504" width="8" height="1" fill="#5e5e5e"/>
<rect x="16.500" y="518" width="3" height="1" fill="#5e5e5e"/>
<rect x="16.500" y="546" width="3" height="1" fill="#5e5e5e"/>
<rect x="14" y="560" width="8" height="1" fill="#5e5e5e"/>
<rect x="16.500" y="574" width="3" height="1" fill="#5e5e5e"/>
<rect x="16.500" y="603" width="3" height="1" fill="#5e5e5e"/>
<rect x="14" y="617" width="8" height="1" fill="#5e5e5e"/>
<rect x="16.500" y="631" width="3" height="1" fill="#5e5e5e"/>
<rect x="16.500" y="659" width="3" height="1" fill="#5e5e5e"/>
<rect x="14" y="674" width="8" height="1" fill="#5e5e5e"/>
<rect x="16.500" y="688" width="3" height="1" fill="#5e5e5e"/>
<rect x="16.500" y="716" width="3" height="1" fill="#5e5e5e"/>
<rect x="14" y="730" width="8" height="1" fill="#5e5e5e"/>
<rect x="16.500" y="745" width="3" height="1" fill="#5e5e5e"/>
<rect x="16.500" y="773" width="3" height="1" fill="#5e5e5e"/>
<rect x="14" y="787" width="8" height="1" fill="#5e5e5e"/>
<rect x="16.500" y="801" width="3" height="1" fill="#5e5e5e"/>
<rect x="16.500" y="830" width="3" height="1" fill="#5e5e5e"/>
<rect x="14" y="844" width="8" height="1" fill="#5e5e5e"/>
<rect x="16.500" y="858" width="3" height="1" fill="#5e5e5e"/>
<rect x="16.500" y="886" width="3" height="1" fill="#5e5e5e"/>
<rect x="14" y="900" width="8" height="1" fill="#5e5e5e"/>
<rect x="16.500" y="915" width="3" height="1" fill="#5e5e5e"/>
<rect x="16.500" y="943" width="3" height="1" fill="#5e5e5e"/>
<rect x="14" y="957" width="8" height="1" fill="#5e5e5e"/>
<rect x="16.500" y="971" width="3" height="1" fill="#5e5e5e"/>
<path d="M403.5 219.8h12v4.6l-6 5.8-6-5.8z" fill="#fff" stroke="#8a8a8a" stroke-width="1"/><path d="M403.5 245.2v-4.6l6-5.8 6 5.8v4.6z" fill="#fff" stroke="#8a8a8a" stroke-width="1"/><rect x="403.5" y="245.2" width="12" height="6.2" fill="#fff" stroke="#8a8a8a" stroke-width="1"/><path d="M1083.5 245.2v-4.6l6-5.8 6 5.8v4.6z" fill="#fff" stroke="#8a8a8a" stroke-width="1"/>
<rect x="415" y="359.8" width="170" height="68.0" fill="#fff" stroke="#000" stroke-width="2"/>
<rect x="410" y="461.6" width="170" height="67.39999999999998" fill="#fff" stroke="#000" stroke-width="2"/>
<rect x="410" y="557.3" width="170" height="67.70000000000005" fill="#fff" stroke="#000" stroke-width="2"/>
<rect x="410" y="659" width="170" height="67.39999999999998" fill="#fff" stroke="#000" stroke-width="2"/>
<rect x="581" y="460.6" width="1" height="42.4" fill="#000"/>
<ellipse cx="602.5" cy="383.75" rx="12.9" ry="13.5" fill="#5b9bd5" stroke="#41719c" stroke-width="1.8"/>
<ellipse cx="711.25" cy="385.4" rx="12.9" ry="13.5" fill="#ff0000" stroke="#41719c" stroke-width="1.8"/>
<ellipse cx="818.1" cy="385.4" rx="12.9" ry="13.5" fill="#ff0000" stroke="#41719c" stroke-width="1.8"/>
<ellipse cx="932.5" cy="383.75" rx="12.9" ry="13.5" fill="#ff0000" stroke="#41719c" stroke-width="1.8"/>
<ellipse cx="1040.8" cy="380.75" rx="12.9" ry="13.5" fill="#ff0000" stroke="#41719c" stroke-width="1.8"/>
<ellipse cx="602.5" cy="483" rx="12.9" ry="13.5" fill="#ffffff" stroke="#41719c" stroke-width="1.8"/>
<ellipse cx="711.25" cy="488.75" rx="12.9" ry="13.5" fill="#5b9bd5" stroke="#41719c" stroke-width="1.8"/>
<ellipse cx="819.5" cy="487.4" rx="12.9" ry="13.5" fill="#ff0000" stroke="#41719c" stroke-width="1.8"/>
<ellipse cx="931.4" cy="486" rx="12.9" ry="13.5" fill="#ff0000" stroke="#41719c" stroke-width="1.8"/>
<ellipse cx="1040" cy="482.75" rx="12.9" ry="13.5" fill="#ff0000" stroke="#41719c" stroke-width="1.8"/>
<ellipse cx="599.2" cy="588" rx="12.9" ry="13.5" fill="#ffffff" stroke="#41719c" stroke-width="1.8"/>
<ellipse cx="710.3" cy="585.3" rx="12.9" ry="13.5" fill="#ffffff" stroke="#41719c" stroke-width="1.8"/>
<ellipse cx="821.1" cy="586.5" rx="12.9" ry="13.5" fill="#5b9bd5" stroke="#41719c" stroke-width="1.8"/>
<ellipse cx="930.4" cy="585.3" rx="12.9" ry="13.5" fill="#ff0000" stroke="#41719c" stroke-width="1.8"/>
<ellipse cx="1041.25" cy="585.3" rx="12.9" ry="13.5" fill="#ff0000" stroke="#41719c" stroke-width="1.8"/>
<ellipse cx="597.8" cy="688.4" rx="12.9" ry="13.5" fill="#ffffff" stroke="#41719c" stroke-width="1.8"/>
<ellipse cx="711.25" cy="690.3" rx="12.9" ry="13.5" fill="#ffffff" stroke="#41719c" stroke-width="1.8"/>
<ellipse cx="822.8" cy="688.4" rx="12.9" ry="13.5" fill="#ffffff" stroke="#41719c" stroke-width="1.8"/>
<ellipse cx="932.3" cy="690.3" rx="12.9" ry="13.5" fill="#5b9bd5" stroke="#41719c" stroke-width="1.8"/>
<ellipse cx="1041.25" cy="688.4" rx="12.9" ry="13.5" fill="#ff0000" stroke="#41719c" stroke-width="1.8"/>
<ellipse cx="423.6" cy="760.5" rx="10.9" ry="11.8" fill="#5b9bd5" stroke="#41719c" stroke-width="1.8"/>
<ellipse cx="423.6" cy="796.4" rx="10.9" ry="11.8" fill="#ff0000" stroke="#41719c" stroke-width="1.8"/>
<rect x="410" y="894" width="1.2" height="25.7" fill="#000"/>
</svg>
<span class="t" style="left:0.00px;top:224.00px;font:400 13.5px 'Liberation Sans',sans-serif;line-height:19px;color:#555;width:30px;text-align:center;margin-left:280.80px;">2</span>
<span class="t" style="left:0.00px;top:224.00px;font:400 13.5px 'Liberation Sans',sans-serif;line-height:19px;color:#555;width:30px;text-align:center;margin-left:337.50px;">1</span>
<span class="t" style="left:0.00px;top:224.00px;font:400 13.5px 'Liberation Sans',sans-serif;line-height:19px;color:#555;width:30px;text-align:center;margin-left:450.90px;">1</span>
<span class="t" style="left:0.00px;top:224.00px;font:400 13.5px 'Liberation Sans',sans-serif;line-height:19px;color:#555;width:30px;text-align:center;margin-left:507.60px;">2</span>
<span class="t" style="left:0.00px;top:224.00px;font:400 13.5px 'Liberation Sans',sans-serif;line-height:19px;color:#555;width:30px;text-align:center;margin-left:564.30px;">3</span>
<span class="t" style="left:0.00px;top:224.00px;font:400 13.5px 'Liberation Sans',sans-serif;line-height:19px;color:#555;width:30px;text-align:center;margin-left:621.00px;">4</span>
<span class="t" style="left:0.00px;top:224.00px;font:400 13.5px 'Liberation Sans',sans-serif;line-height:19px;color:#555;width:30px;text-align:center;margin-left:677.70px;">5</span>
<span class="t" style="left:0.00px;top:224.00px;font:400 13.5px 'Liberation Sans',sans-serif;line-height:19px;color:#555;width:30px;text-align:center;margin-left:734.40px;">6</span>
<span class="t" style="left:0.00px;top:224.00px;font:400 13.5px 'Liberation Sans',sans-serif;line-height:19px;color:#555;width:30px;text-align:center;margin-left:791.10px;">7</span>
<span class="t" style="left:0.00px;top:224.00px;font:400 13.5px 'Liberation Sans',sans-serif;line-height:19px;color:#555;width:30px;text-align:center;margin-left:847.80px;">8</span>
<span class="t" style="left:0.00px;top:224.00px;font:400 13.5px 'Liberation Sans',sans-serif;line-height:19px;color:#555;width:30px;text-align:center;margin-left:904.50px;">9</span>
<span class="t" style="left:0.00px;top:224.00px;font:400 13.5px 'Liberation Sans',sans-serif;line-height:19px;color:#555;width:30px;text-align:center;margin-left:961.20px;">10</span>
<span class="t" style="left:0.00px;top:224.00px;font:400 13.5px 'Liberation Sans',sans-serif;line-height:19px;color:#555;width:30px;text-align:center;margin-left:1017.90px;">11</span>
<span class="t" style="left:0.00px;top:224.00px;font:400 13.5px 'Liberation Sans',sans-serif;line-height:19px;color:#555;width:30px;text-align:center;margin-left:1131.30px;">13</span>
<div style="left:0;top:277px;width:30px;height:710px;overflow:hidden">
<span class="t" style="left:1.7px;top:20.60px;width:30px;height:16px;line-height:16px;text-align:center;font-size:13.5px;color:#555;transform:rotate(-90deg);transform-origin:50% 50%;">1</span>
<span class="t" style="left:1.7px;top:134.00px;width:30px;height:16px;line-height:16px;text-align:center;font-size:13.5px;color:#555;transform:rotate(-90deg);transform-origin:50% 50%;">1</span>
<span class="t" style="left:1.7px;top:190.70px;width:30px;height:16px;line-height:16px;text-align:center;font-size:13.5px;color:#555;transform:rotate(-90deg);transform-origin:50% 50%;">2</span>
<span class="t" style="left:1.7px;top:247.40px;width:30px;height:16px;line-height:16px;text-align:center;font-size:13.5px;color:#555;transform:rotate(-90deg);transform-origin:50% 50%;">3</span>
<span class="t" style="left:1.7px;top:304.10px;width:30px;height:16px;line-height:16px;text-align:center;font-size:13.5px;color:#555;transform:rotate(-90deg);transform-origin:50% 50%;">4</span>
<span class="t" style="left:1.7px;top:360.80px;width:30px;height:16px;line-height:16px;text-align:center;font-size:13.5px;color:#555;transform:rotate(-90deg);transform-origin:50% 50%;">5</span>
<span class="t" style="left:1.7px;top:417.50px;width:30px;height:16px;line-height:16px;text-align:center;font-size:13.5px;color:#555;transform:rotate(-90deg);transform-origin:50% 50%;">6</span>
<span class="t" style="left:1.7px;top:474.20px;width:30px;height:16px;line-height:16px;text-align:center;font-size:13.5px;color:#555;transform:rotate(-90deg);transform-origin:50% 50%;">7</span>
<span class="t" style="left:1.7px;top:530.90px;width:30px;height:16px;line-height:16px;text-align:center;font-size:13.5px;color:#555;transform:rotate(-90deg);transform-origin:50% 50%;">8</span>
<span class="t" style="left:1.7px;top:587.60px;width:30px;height:16px;line-height:16px;text-align:center;font-size:13.5px;color:#555;transform:rotate(-90deg);transform-origin:50% 50%;">9</span>
<span class="t" style="left:1.7px;top:644.30px;width:30px;height:16px;line-height:16px;text-align:center;font-size:13.5px;color:#555;transform:rotate(-90deg);transform-origin:50% 50%;">10</span>
<span class="t" style="left:1.7px;top:701.00px;width:30px;height:16px;line-height:16px;text-align:center;font-size:13.5px;color:#555;transform:rotate(-90deg);transform-origin:50% 50%;">11</span>
</div>
<span class="t" style="left:434.26px;top:368.00px;font:400 20.5px 'Liberation Sans',sans-serif;line-height:27px;color:#000;transform:scaleX(0.9930);">Probe position</span>
<span class="t" style="left:0.00px;top:397.00px;font:400 20.5px 'Liberation Sans',sans-serif;line-height:27px;color:#000;width:40px;text-align:center;margin-left:479.4px;">1</span>
<span class="t" style="left:430.00px;top:469.00px;font:400 20.5px 'Liberation Sans',sans-serif;line-height:27px;color:#000;">Probe position</span>
<span class="t" style="left:0.00px;top:498.00px;font:400 20.5px 'Liberation Sans',sans-serif;line-height:27px;color:#000;width:40px;text-align:center;margin-left:475.25px;">2</span>
<span class="t" style="left:430.00px;top:565.00px;font:400 20.5px 'Liberation Sans',sans-serif;line-height:27px;color:#000;">Probe position</span>
<span class="t" style="left:0.00px;top:593.00px;font:400 20.5px 'Liberation Sans',sans-serif;line-height:27px;color:#000;width:40px;text-align:center;margin-left:475.25px;">3</span>
<span class="t" style="left:430.00px;top:667.00px;font:400 20.5px 'Liberation Sans',sans-serif;line-height:27px;color:#000;">Probe position</span>
<span class="t" style="left:0.00px;top:695.00px;font:400 20.5px 'Liberation Sans',sans-serif;line-height:27px;color:#000;width:40px;text-align:center;margin-left:475.25px;">4</span>
<span class="t" style="left:464.05px;top:748.00px;font:400 20.5px 'Liberation Sans',sans-serif;line-height:27px;color:#000;transform:scaleX(0.9517);">Probe 1</span>
<span class="t" style="left:464.04px;top:784.00px;font:400 20.5px 'Liberation Sans',sans-serif;line-height:27px;color:#000;transform:scaleX(0.9588);">Probe 2</span>
<span class="t" style="left:0.00px;top:394.00px;font:400 20.5px 'Liberation Serif',serif;line-height:26px;color:#000;width:40px;text-align:center;margin-left:581.50px;">1</span>
<span class="t" style="left:0.00px;top:395.00px;font:400 20.5px 'Liberation Serif',serif;line-height:26px;color:#000;width:40px;text-align:center;margin-left:689.40px;">2</span>
<span class="t" style="left:0.00px;top:397.00px;font:400 20.5px 'Liberation Serif',serif;line-height:26px;color:#000;width:40px;text-align:center;margin-left:801.50px;">3</span>
<span class="t" style="left:0.00px;top:394.00px;font:400 20.5px 'Liberation Serif',serif;line-height:26px;color:#000;width:40px;text-align:center;margin-left:911.60px;">4</span>
<span class="t" style="left:0.00px;top:399.00px;font:400 20.5px 'Liberation Serif',serif;line-height:26px;color:#000;width:40px;text-align:center;margin-left:1020.30px;">5</span>
<span class="t" style="left:0.00px;top:495.00px;font:400 20.5px 'Liberation Serif',serif;line-height:26px;color:#000;width:40px;text-align:center;margin-left:581.50px;">1</span>
<span class="t" style="left:0.00px;top:495.00px;font:400 20.5px 'Liberation Serif',serif;line-height:26px;color:#000;width:40px;text-align:center;margin-left:690.30px;">2</span>
<span class="t" style="left:0.00px;top:495.00px;font:400 20.5px 'Liberation Serif',serif;line-height:26px;color:#000;width:40px;text-align:center;margin-left:801.50px;">3</span>
<span class="t" style="left:0.00px;top:495.00px;font:400 20.5px 'Liberation Serif',serif;line-height:26px;color:#000;width:40px;text-align:center;margin-left:911.60px;">4</span>
<span class="t" style="left:0.00px;top:494.00px;font:400 20.5px 'Liberation Serif',serif;line-height:26px;color:#000;width:40px;text-align:center;margin-left:1020.30px;">5</span>
<span class="t" style="left:0.00px;top:596.00px;font:400 20.5px 'Liberation Serif',serif;line-height:26px;color:#000;width:40px;text-align:center;margin-left:581.50px;">1</span>
<span class="t" style="left:0.00px;top:600.00px;font:400 20.5px 'Liberation Serif',serif;line-height:26px;color:#000;width:40px;text-align:center;margin-left:689.40px;">2</span>
<span class="t" style="left:0.00px;top:600.00px;font:400 20.5px 'Liberation Serif',serif;line-height:26px;color:#000;width:40px;text-align:center;margin-left:801.50px;">3</span>
<span class="t" style="left:0.00px;top:601.00px;font:400 20.5px 'Liberation Serif',serif;line-height:26px;color:#000;width:40px;text-align:center;margin-left:911.60px;">4</span>
<span class="t" style="left:0.00px;top:596.00px;font:400 20.5px 'Liberation Serif',serif;line-height:26px;color:#000;width:40px;text-align:center;margin-left:1022.20px;">5</span>
<span class="t" style="left:0.00px;top:696.00px;font:400 20.5px 'Liberation Serif',serif;line-height:26px;color:#000;width:40px;text-align:center;margin-left:581.50px;">1</span>
<span class="t" style="left:0.00px;top:697.00px;font:400 20.5px 'Liberation Serif',serif;line-height:26px;color:#000;width:40px;text-align:center;margin-left:688.40px;">2</span>
<span class="t" style="left:0.00px;top:697.00px;font:400 20.5px 'Liberation Serif',serif;line-height:26px;color:#000;width:40px;text-align:center;margin-left:801.50px;">3</span>
<span class="t" style="left:0.00px;top:697.00px;font:400 20.5px 'Liberation Serif',serif;line-height:26px;color:#000;width:40px;text-align:center;margin-left:912.50px;">4</span>
<span class="t" style="left:0.00px;top:698.00px;font:400 20.5px 'Liberation Serif',serif;line-height:26px;color:#000;width:40px;text-align:center;margin-left:1021.25px;">5</span>
<div style="left:1816px;top:491px;width:58px;height:34.5px;background:#fff;border:1px solid #ababab;box-sizing:border-box;"></div>
<div style="left:1771px;top:532px;width:103px;height:32px;background:#fff;border:1px solid #ababab;box-sizing:border-box;"></div>
<svg width="1920" height="1080" viewBox="0 0 1920 1080">
<path d="M1865.3 239.8h12.5l-6.25 7z" fill="#5e5e5e"/>
<path d="M1891.4 237.4l11.4 11.6M1902.8 237.4l-11.4 11.6" stroke="#555" stroke-width="3"/>
<rect x="1515" y="299.5" width="36" height="8" fill="#2b579a"/>
<path d="M1510 329.500h16.700l9.300-11.600 9.300 11.600h357.700" fill="none" stroke="#c6c6c6" stroke-width="1"/>
<g fill="#fff" stroke="#9a9a9a" stroke-width="1" opacity="0.55"><path d="M1573 300h5l2.600 6.500h-4.400z"/><path d="M1595 300h-5l-2.600 6.500h4.400z"/><path d="M1578 300l2.600 6.500h7.400l2.600-6.500" fill="none"/></g>
<rect x="1540" y="481.6" width="334" height="1" fill="#dcdcdc"/>
<path d="M1530.5 342.5v10.5h-11.5z" fill="#444"/><path d="M1530.5 586.5v10.5h-11.5z" fill="#444"/>
<circle cx="1550" cy="388" r="8.4" fill="#fff" stroke="#ababab" stroke-width="1.2"/>
<circle cx="1550" cy="423.75" r="8.4" fill="#fff" stroke="#ababab" stroke-width="1.2"/>
<circle cx="1550" cy="423.75" r="4.4" fill="#767676"/>
<circle cx="1550" cy="460" r="8.4" fill="#fff" stroke="#ababab" stroke-width="1.2"/>
<circle cx="1550" cy="632.5" r="8.4" fill="#fff" stroke="#ababab" stroke-width="1.2"/>
<circle cx="1550" cy="632.5" r="4.4" fill="#767676"/>
<circle cx="1550" cy="668.25" r="8.4" fill="#fff" stroke="#ababab" stroke-width="1.2"/>
<circle cx="1550" cy="704.25" r="8.4" fill="#fff" stroke="#ababab" stroke-width="1.2"/>
<rect x="1825" y="514.5" width="23.8" height="5.6" fill="#000"/><path d="M1835.6 498.4l8.4 7.2-7 7.8-8.6-7z" fill="#fff" stroke="#555" stroke-width="1.2"/><path d="M1836 503v-5.2a1.7 1.7 0 0 1 3.4 0v3" fill="none" stroke="#555" stroke-width="1.1"/><path d="M1844.2 505.2c2.4.8 3 3.4 1.4 6.4-.4-2.2-1.4-3.2-3.4-3.4z" fill="#3e79c0"/>
<path d="M1856.4 505.4h9.2l-4.6 5.2z" fill="#666"/>
<rect x="1668" y="547" width="97" height="1" fill="#ababab"/><rect x="1662" y="540" width="6" height="15" fill="#777"/>
<path d="M1857.2 543h7.6l-3.8-4.6z" fill="#555"/><path d="M1857.2 554h7.6l-3.8 4.6z" fill="#555"/>
</svg>
<span class="t" style="left:1509.65px;top:229.00px;font:400 32.5px 'Liberation Sans',sans-serif;line-height:40px;color:#2b579a;transform:scaleX(0.9264);-webkit-text-stroke:0.9px #e6e6e6;">Format Text Effects</span>
<span class="t" style="left:1522.40px;top:265.00px;font:400 32.6px 'Liberation Sans',sans-serif;line-height:41px;color:#2b579a;transform:scaleX(0.9227);-webkit-text-stroke:1.3px #2b579a;">A</span>
<svg style="left:1573.60px;top:298px" width="1" height="1"><text transform="scale(0.8667,1)" x="0" y="0" font-family="Liberation Sans,sans-serif" font-size="34.5" font-weight="700" fill="#fff" stroke="#6e6e6e" stroke-width="2" stroke-linejoin="round" paint-order="stroke">A</text></svg>
<span class="t" style="left:1540.00px;top:336.00px;font:700 19px 'Liberation Sans',sans-serif;line-height:25px;color:#2b579a;transform:scaleX(0.9363);">Text Fill</span>
<span class="t" style="left:1565.53px;top:377.00px;font:400 18px 'Liberation Sans',sans-serif;line-height:24px;color:#444;transform:scaleX(1.0672);"><u>N</u>o fill</span>
<span class="t" style="left:1566.60px;top:413.00px;font:400 18px 'Liberation Sans',sans-serif;line-height:24px;color:#444;transform:scaleX(1.0160);"><u>S</u>olid fill</span>
<span class="t" style="left:1566.60px;top:449.00px;font:400 18px 'Liberation Sans',sans-serif;line-height:24px;color:#444;transform:scaleX(0.9929);"><u>G</u>radient fill</span>
<span class="t" style="left:1550.00px;top:497.00px;font:400 18px 'Liberation Sans',sans-serif;line-height:24px;color:#444;"><u>C</u>olor</span>
<span class="t" style="left:1550.00px;top:536.00px;font:400 18px 'Liberation Sans',sans-serif;line-height:24px;color:#444;transform:scaleX(0.9417);"><u>T</u>ransparency</span>
<span class="t" style="left:1778.00px;top:536.00px;font:400 16px 'Liberation Sans',sans-serif;line-height:21px;color:#444;transform:scaleX(0.9608);">0%</span>
<span class="t" style="left:1540.00px;top:580.00px;font:700 19px 'Liberation Sans',sans-serif;line-height:25px;color:#2b579a;transform:scaleX(0.9623);">Text Outline</span>
<span class="t" style="left:1565.24px;top:621.00px;font:400 18px 'Liberation Sans',sans-serif;line-height:24px;color:#444;transform:scaleX(1.0133);"><u>N</u>o line</span>
<span class="t" style="left:1566.25px;top:657.00px;font:400 18px 'Liberation Sans',sans-serif;line-height:24px;color:#444;transform:scaleX(0.9824);"><u>S</u>olid line</span>
<span class="t" style="left:1566.00px;top:693.00px;font:400 18px 'Liberation Sans',sans-serif;line-height:24px;color:#444;transform:scaleX(0.9701);"><u>G</u>radient line</span>
<div style="left:1574.4px;top:988px;width:44.6px;height:32px;background:#c6c6c6;"></div>
<svg width="1920" height="1080" viewBox="0 0 1920 1080">
<path d="M200.5 997v13M200.5 997c-3-1.6-6.6-1.6-9.8 0v12.4c3.2-1.4 6.8-1.4 9.8.6M200.5 997c2-1 3.4-1.4 5-1.6" fill="none" stroke="#666" stroke-width="1.2"/><path d="M203 1002.6l2.8 3.2 5-6.6" fill="none" stroke="#666" stroke-width="1.6"/>
<circle cx="408.6" cy="997" r="3.8" fill="#666"/><rect x="408" y="999.5" width="16.5" height="12.5" fill="#fff" stroke="#666" stroke-width="1.2"/><path d="M412 996.4h12.5v3" fill="none" stroke="#666" stroke-width="1.2"/><path d="M410 1003.4h13M410 1006.4h13M410 1009.4h13" stroke="#666" stroke-width="1" stroke-dasharray="2.6 1.2"/>
<path d="M1551.6 996v15.6M1551.6 996.2c-3-1.4-6-1.4-9.2-.4v13.4c3.2-.8 6.2-.6 9.2.6 3-1.2 6-1.4 9.2-.6v-13.4c-3.2-1-6.2-1-9.2.4" fill="none" stroke="#666" stroke-width="1.2"/><path d="M1544.4 999.4h5M1544.4 1002.4h5M1544.4 1005.4h5M1553.8 999.4h5M1553.8 1002.4h5M1553.8 1005.4h5" stroke="#666" stroke-width="1"/>
<rect x="1587.6" y="994.8" width="18" height="16.4" fill="none" stroke="#666" stroke-width="1.2"/><path d="M1590.4 998.6h12.4M1590.4 1001.6h12.4M1590.4 1004.6h12.4M1590.4 1007.6h12.4" stroke="#666" stroke-width="1.1"/>
<path d="M1648.6 1002v-7h-16v15h8" fill="none" stroke="#666" stroke-width="1.2"/><path d="M1635 998.4h11M1635 1001.4h9M1635 1004.4h6" stroke="#666" stroke-width="1.1"/><circle cx="1646.4" cy="1006.4" r="5.6" fill="#666"/><path d="M1643 1004.6c1.6-.6 2.4.8 1.8 2.2s1.2 2 .6 3.6M1648 1002.4c-.6 1.4.6 2.2 2 2.4s1 2.2 0 3.400" fill="none" stroke="#f1f1f1" stroke-width="1.1"/>
<rect x="1670.2" y="1001.8" width="10.8" height="2" fill="#666"/><rect x="1686.4" y="1002.8" width="149.4" height="1" fill="#9a9a9a"/><rect x="1758" y="995.3" width="6" height="16.2" fill="#666"/><rect x="1841.7" y="1001.8" width="12.7" height="2" fill="#666"/><rect x="1847" y="996.5" width="2" height="12.6" fill="#666"/>
</svg>
<span class="t" style="left:6.57px;top:993.00px;font:400 16px 'Liberation Sans',sans-serif;line-height:21px;color:#444;transform:scaleX(0.9266);">Page 1 of 1</span>
<span class="t" style="left:104.01px;top:993.00px;font:400 16px 'Liberation Sans',sans-serif;line-height:21px;color:#444;transform:scaleX(0.9856);">16 words</span>
<span class="t" style="left:228.55px;top:993.00px;font:400 16px 'Liberation Sans',sans-serif;line-height:21px;color:#444;transform:scaleX(0.9458);">English (United States)</span>
<span class="t" style="left:1871.03px;top:993.00px;font:400 16px 'Liberation Sans',sans-serif;line-height:21px;color:#444;transform:scaleX(0.9724);">100%</span>
<div style="left:1031px;top:1020px;width:66.4px;height:60px;background:rgba(255,255,255,0.19);"></div>
<div style="left:1097.4px;top:1020px;width:1.6px;height:60px;background:rgba(0,0,0,0.12);"></div>
<div style="left:1099px;top:1020px;width:4.6px;height:60px;background:rgba(255,255,255,0.08);"></div>
<div class="search" style="left:72.7px;top:1020px;width:430.3px;height:59px;background:#f2f2f2;border:1px solid #c2c2c2;border-top:2px solid #bdbdbd;border-right:1px solid #e8e8e8;box-sizing:border-box;"></div>
<div style="left:587px;top:1077px;width:61px;height:3px;background:#76b9ed;"></div>
<div style="left:737px;top:1077px;width:61px;height:3px;background:#76b9ed;"></div>
<div style="left:887px;top:1077px;width:61px;height:3px;background:#76b9ed;"></div>
<div style="left:962px;top:1077px;width:61px;height:3px;background:#76b9ed;"></div>
<div style="left:1031px;top:1077px;width:72.6px;height:3px;background:#76b9ed;"></div>
<div style="left:1112px;top:1077px;width:60.6px;height:3px;background:#76b9ed;"></div>
<div style="left:1187.6px;top:1077px;width:59.8px;height:3px;background:#76b9ed;"></div>
<div style="left:1262.3px;top:1077px;width:59.7px;height:3px;background:#76b9ed;"></div>
<svg width="1920" height="1080" viewBox="0 0 1920 1080">
<defs><linearGradient id="gbp" x1="0" y1="0" x2="0" y2="1"><stop offset="0" stop-color="#1f8dfb"/><stop offset="1" stop-color="#0b48d6"/></linearGradient><linearGradient id="gpk" x1="0" y1="0" x2="0" y2="1"><stop offset="0" stop-color="#2a7bf6"/><stop offset=".7" stop-color="#3c63ea"/><stop offset="1" stop-color="#cf7cf2"/></linearGradient><linearGradient id="gsun" x1="0" y1="0" x2="0" y2="1"><stop offset="0" stop-color="#fbb61f"/><stop offset="1" stop-color="#ee771b"/></linearGradient><linearGradient id="gcl" x1="0" y1="0" x2="0" y2="1"><stop offset="0" stop-color="#e6eefc"/><stop offset="1" stop-color="#9db8ea"/></linearGradient><linearGradient id="gedge" x1="0" y1="1" x2="1" y2="0"><stop offset="0" stop-color="#1b9de2"/><stop offset=".55" stop-color="#2fc0d0"/><stop offset="1" stop-color="#62d85a"/></linearGradient></defs>
<path d="M24 1041.4l10.4-1.4v9.6h-10.4zM35.8 1039.8l12.500-1.8v11.6h-12.500zM24 1051h10.4v9.700l-10.4-1.4zM35.8 1051h12.500v11.700l-12.500-1.8z" fill="#fff"/>
<circle cx="106" cy="1046.4" r="7.600" fill="none" stroke="#222" stroke-width="1.800"/><path d="M100.600 1052l-9.600 9.600" stroke="#222" stroke-width="2"/>
<path d="M401.900 1058.200h100.600v17.200h-115.900z" fill="#f0cfa2"/><rect x="386.600" y="1075.400" width="115.900" height="4.600" fill="#dab384"/>
<path d="M407 1066.500l17.500-5 18.800-4.300 1.200 3.200-18.500 4.800-17 5.600z" fill="#43a047"/><path d="M404.800 1046l16-7.500 3.700 22.500-17.500 6z" fill="#f7f4fb"/><path d="M420.800 1038.500l18-2.500 4.200 21.500-18.500 4z" fill="#efeaf6"/><path d="M409.500 1048l9.500-4M410.300 1052l9.500-4M411 1056l9.500-4M411.800 1060l9.500-4M425 1042.200l10-1.600M425.800 1046.200l6-1M426.500 1050.200l10-1.600M427.300 1054.200l10-1.600" stroke="#c9c6cf" stroke-width="1"/><path d="M431.200 1049.800l11.700-16.600 4.200 3-11.700 16.600-5 2.400z" fill="#f6ab2e"/><path d="M442.900 1033.200l2.600-3.400 4.200 3-2.600 3.400z" fill="#f0523c"/><path d="M430.400 1055.200l.8-5.400 4.200 3z" fill="#b5564e"/>
<path d="M467.800 1031.500c0-8.400 10.400-8.400 10.400 0" fill="none" stroke="#1565e8" stroke-width="2.400"/><path d="M458.500 1044c0-18 29.500-18 29.500 0v19c0 5-3 7.300-7 7.300h-15.500c-4 0-7-2.300-7-7.300z" fill="url(#gbp)"/><path d="M461.200 1036.500c4-8.500 20-8.500 24 0" fill="none" stroke="#cfd6ff" stroke-width="1"/><path d="M461.700 1060c0-14.500 23.300-14.500 23.300 0v4c0 3-2 4.500-4.500 4.500h-14.300c-2.500 0-4.500-1.500-4.500-4.500z" fill="url(#gpk)"/>
<g fill="none" stroke="#fff" stroke-width="1.500"><rect x="528.700" y="1044.700" width="15.400" height="10.600"/><path d="M528.700 1038.200v3.200h15.400v-3.200M528.700 1060.800v-3.200h15.400v3.200"/><path d="M550.600 1038.200v22.600"/></g><rect x="549.200" y="1044.800" width="2.800" height="3.200" fill="#fff"/>
<path d="M599.200 1049.500c.5-10 8.500-17.200 18.300-17.200 10 0 17.700 7 17.700 16 0 6-4.400 10-9.600 10-3.600 0-5.200-1.600-5.200-3 0-1.500 1.700-2 1.700-4.800 0-3-2.800-5.600-6.600-5.600-6.500 0-10.300 5.600-10.300 11.300 0 2 .4 3.800 1 5.300-4.300-2.600-7-7-7-12z" fill="url(#gedge)"/><path d="M605.200 1056.200c0 6.800 5.500 11.800 12.300 11.800 5 0 9.500-2.400 12.500-6.300-2 1-4.200 1.500-6.500 1.300-5.500-.4-9.500-4.800-9.500-9.500 0-2 .8-3.600 1.600-4.600-6 .3-10.400 3.300-10.400 7.300z" fill="#0c59a4"/><rect x="598.800" y="1056.200" width="18.200" height="11.800" rx="1.500" fill="#e8951c"/><rect x="598.800" y="1060.600" width="18.200" height="1.400" fill="#b5650c"/><rect x="606.900" y="1060" width="2.200" height="2.600" fill="#fde06a"/><path d="M604.600 1056.200v-2.200h6.600v2.200" fill="none" stroke="#7a4a12" stroke-width="1.500"/>
<rect x="674" y="1032" width="36" height="35.800" fill="#0061fe"/><path d="M681.6 1044l5.1-3.300 5.100 3.300-5.100 3.300zM692.1 1044l5.1-3.300 5.100 3.300-5.100 3.300zM681.6 1050.6l5.1-3.300 5.100 3.300-5.100 3.300zM692.1 1050.6l5.1-3.300 5.100 3.300-5.100 3.300zM686.9 1056.5l5.1-3.300 5.100 3.300-5.100 3.300z" fill="#f7f5f2"/>
<path d="M751.100 1038.300a1.500 1.500 0 0 1 1.500-1.500h10.400l2.300 2.800h16.100a1.500 1.500 0 0 1 1.500 1.500v4h-31.800z" fill="#e8a800"/><rect x="751.100" y="1040.400" width="31.800" height="22.600" rx="1.200" fill="#fcd25a"/><path d="M756.300 1063v-10.400a2 2 0 0 1 2-2h17.100a2 2 0 0 1 2 2v10.400h-5.100v-7.300h-10.900v7.300z" fill="#3d98e3"/>
<path d="M848.400 1032l-5.400 11.300 7.300 11.400-15 13.100 5.500-11.300-7.300-11.400z" fill="#fff"/>
<path d="M909.67 1054.23L901.73 1040.47A18 18 0 0 1 932.89 1041.54L917.00 1041.54L917 1050z" fill="#e94235"/><path d="M917.00 1041.54L932.89 1041.54A18 18 0 0 1 916.38 1067.99L924.33 1054.23L917 1050z" fill="#fbc116"/><path d="M924.33 1054.23L916.38 1067.99A18 18 0 0 1 901.73 1040.47L909.67 1054.23L917 1050z" fill="#2da44e"/><circle cx="917" cy="1050" r="8.46" fill="#fff"/><circle cx="917" cy="1050" r="6.66" fill="#3b7ded"/>
<circle cx="926.200" cy="1059.100" r="11.400" fill="#a83fc7"/>
<path d="M973.800 1043.400l18.100-11 18.100 11v2h-36.200z" fill="#0b5cad"/><rect x="973.800" y="1043.400" width="36.200" height="22.600" rx="1.500" fill="#28a8ea"/><path d="M976.400 1043.400h31l-15.500 10.200z" fill="#f4f4f4"/><path d="M976.400 1043.400h31v1.200h-31z" fill="#0a4f96"/><path d="M991.900 1053.600l18.100-9.600v20.500a1.500 1.500 0 0 1-1.500 1.500h-2.500z" fill="#47cdf7"/>
<rect x="1067" y="1037.200" width="15.200" height="25.100" rx="1" fill="#fff" stroke="#2b579a" stroke-width="1.400"/><path d="M1071 1041.500h9M1071 1045h9M1071 1048.500h9M1071 1052h9M1071 1055.500h9M1071 1059h9" stroke="#2b579a" stroke-width="1.500"/><path d="M1050.800 1037.200l19-3.300v32.100l-19-3.300z" fill="#2b579a"/>
<path d="M1134.67 1054.23L1126.73 1040.47A18 18 0 0 1 1157.89 1041.54L1142.00 1041.54L1142 1050z" fill="#e94235"/><path d="M1142.00 1041.54L1157.89 1041.54A18 18 0 0 1 1141.38 1067.99L1149.33 1054.23L1142 1050z" fill="#fbc116"/><path d="M1149.33 1054.23L1141.38 1067.99A18 18 0 0 1 1126.73 1040.47L1134.67 1054.23L1142 1050z" fill="#2da44e"/><circle cx="1142" cy="1050" r="8.46" fill="#fff"/><circle cx="1142" cy="1050" r="6.66" fill="#3b7ded"/>
<circle cx="1151.500" cy="1059.100" r="11.700" fill="#1d5166"/><ellipse cx="1151.500" cy="1054.800" rx="3.800" ry="4.600" fill="#c39b80"/><path d="M1147.200 1052.600c0-6 8.600-6 8.600 0z" fill="#222"/><path d="M1142.600 1066.500c1.500-7.500 16.300-7.500 17.800 0a11.700 11.700 0 0 1-17.800 0z" fill="#2a2f3f"/><path d="M1150.300 1060.500h2.400l.6 8h-3.600z" fill="#8e95a8"/>
<rect x="1200.100" y="1032.800" width="33.900" height="32.700" rx="1.200" fill="#b8152f"/><rect x="1200.100" y="1049" width="33.900" height="16.500" rx="1.200" fill="#a30f27"/><path d="M1206.300 1053.800c1-4 3.400-4 5.100-7.500M1217.600 1053.800c-1.200-3.600-4-4-6.200-7.500M1217.600 1053.800c1.200-3.600 4-4 6.200-7.500M1228.100 1053.800c-1-4-3.400-4-4.400-7.500" fill="none" stroke="#f3e9ea" stroke-width="3"/><circle cx="1211.400" cy="1046" r="3.700" fill="#f3e9ea"/><circle cx="1223.800" cy="1046" r="3.700" fill="#f3e9ea"/><path d="M1211.400 1044.500h12.400v3.600h-12.400z" fill="#f3e9ea"/><circle cx="1206.300" cy="1054" r="2.700" fill="#f3e9ea"/><circle cx="1217.600" cy="1054" r="2.700" fill="#f3e9ea"/><circle cx="1228.500" cy="1054" r="2.700" fill="#f3e9ea"/><circle cx="1217.600" cy="1047.600" r="2.300" fill="#c8102e"/>
<rect x="1274.700" y="1032.800" width="34.400" height="34.300" fill="#5596b3" stroke="#176a99" stroke-width="1.500"/><path d="M1302.500 1038.400h-20.100a1.800 1.800 0 0 0-1.800 1.800v12a1.800 1.800 0 0 0 1.800 1.800h16.500M1285.300 1061.700h16.900a1.800 1.800 0 0 0 1.800-1.800v-11.800a1.800 1.800 0 0 0-1.800-1.800h-15" fill="none" stroke="#fff" stroke-width="3.600"/>
<circle cx="1383.700" cy="1051.800" r="16" fill="#fff"/><circle cx="1383.700" cy="1051.800" r="12.800" fill="#0e90d2"/><circle cx="1395.500" cy="1058.600" r="7.300" fill="#f2a71f"/>
<circle cx="1468.600" cy="1044.800" r="8.800" fill="url(#gsun)"/><path d="M1450.500 1067a7.600 7.600 0 0 1-1-15.100 11 11 0 0 1 20.500-2.400 7 7 0 0 1 9.300 6.600c0 5.500-3.300 10.900-8.300 10.900z" fill="url(#gcl)"/>
<path d="M1572.900 1054.300l9.200-9.800 9.200 9.800" fill="none" stroke="#fff" stroke-width="1.500"/>
<path d="M1610.600 1058.200a5 5 0 0 1-.8-9.900 7.400 7.400 0 0 1 13.600-2 5.500 5.500 0 0 1 2.600 11.900z" fill="#1f8de6"/><path d="M1609.800 1048.300a7.400 7.400 0 0 1 13.600-2l-9 5.500z" fill="#0a64c0"/><path d="M1605.900 1054.500l17.500-8.200a5.500 5.500 0 0 1 5.800 3.500l-19 8.400a5 5 0 0 1-4.300-3.700z" fill="#1478d4"/><path d="M1610.600 1058.200l18.700-8.400a5.500 5.500 0 0 1-3.300 8.400z" fill="#35a8f0"/>
<g fill="none" stroke="#fff" stroke-width="1.300"><rect x="1647.500" y="1045.300" width="10.200" height="10.200" rx="2"/><path d="M1657.700 1049l4.800-2.800v8.400l-4.800-2.800"/><path d="M1648.500 1041c3-2.600 9-2.600 12 0M1648.500 1059.600c3 2.600 9 2.600 12 0"/></g>
<path d="M1858 1038h23.900v18.900h-11l-2.900 4.100v-4.100h-10z" fill="#fff"/><path d="M1862.800 1043h14.400M1862.800 1046.600h14.400M1862.800 1050.200h14.400" stroke="#2a4446" stroke-width="1.200"/><circle cx="1881.250" cy="1061.250" r="11.200" fill="#2a3538" stroke="#8a9596" stroke-width="1.400"/>
<rect x="1912.600" y="1020" width="1" height="60" fill="#869192"/>
</svg>
<span class="t" style="left:132.70px;top:1037.00px;font:400 23.5px 'Liberation Sans',sans-serif;line-height:30px;color:#2a2a2a;transform:scaleX(0.9514);">Type here to search</span>
<span class="t" style="left:922.20px;top:1050.00px;font:700 14.5px 'Liberation Sans',sans-serif;line-height:20px;color:#ecd3f5;transform:scaleX(0.8889);">T</span>
<span class="t" style="left:1053.00px;top:1040.00px;font:700 15px 'Liberation Sans',sans-serif;line-height:21px;color:#fff;transform:scaleX(0.9000);">W</span>
<span class="t" style="left:1377.12px;top:1037.00px;font:700 24px 'Liberation Sans',sans-serif;line-height:31px;color:#fff;transform:scaleX(0.8846);">?</span>
<span class="t" style="left:1394.20px;top:1051.00px;font:700 11.5px 'Liberation Sans',sans-serif;line-height:16px;color:#fff;transform:scaleX(0.8667);">i</span>
<span class="t" style="left:1491.08px;top:1038.00px;font:400 21px 'Liberation Sans',sans-serif;line-height:27px;color:#fff;transform:scaleX(0.9245);">28°C</span>
<span class="t" style="left:1681.85px;top:1038.00px;font:400 17.5px 'Liberation Sans',sans-serif;line-height:24px;color:#fff;transform:scaleX(0.8992);">ENG</span>
<span class="t" style="left:1766.60px;top:1025.00px;font:400 18px 'Liberation Sans',sans-serif;line-height:24px;color:#fff;transform:scaleX(0.9365);">8:50</span>
<span class="t" style="left:1736.50px;top:1053.00px;font:400 18px 'Liberation Sans',sans-serif;line-height:24px;color:#fff;transform:scaleX(1.0241);">09/10/2023</span>
<span class="t" style="left:1876.90px;top:1050.00px;font:700 16.5px 'Liberation Sans',sans-serif;line-height:22px;color:#fff;transform:scaleX(0.9444);">5</span>
</body></html>
